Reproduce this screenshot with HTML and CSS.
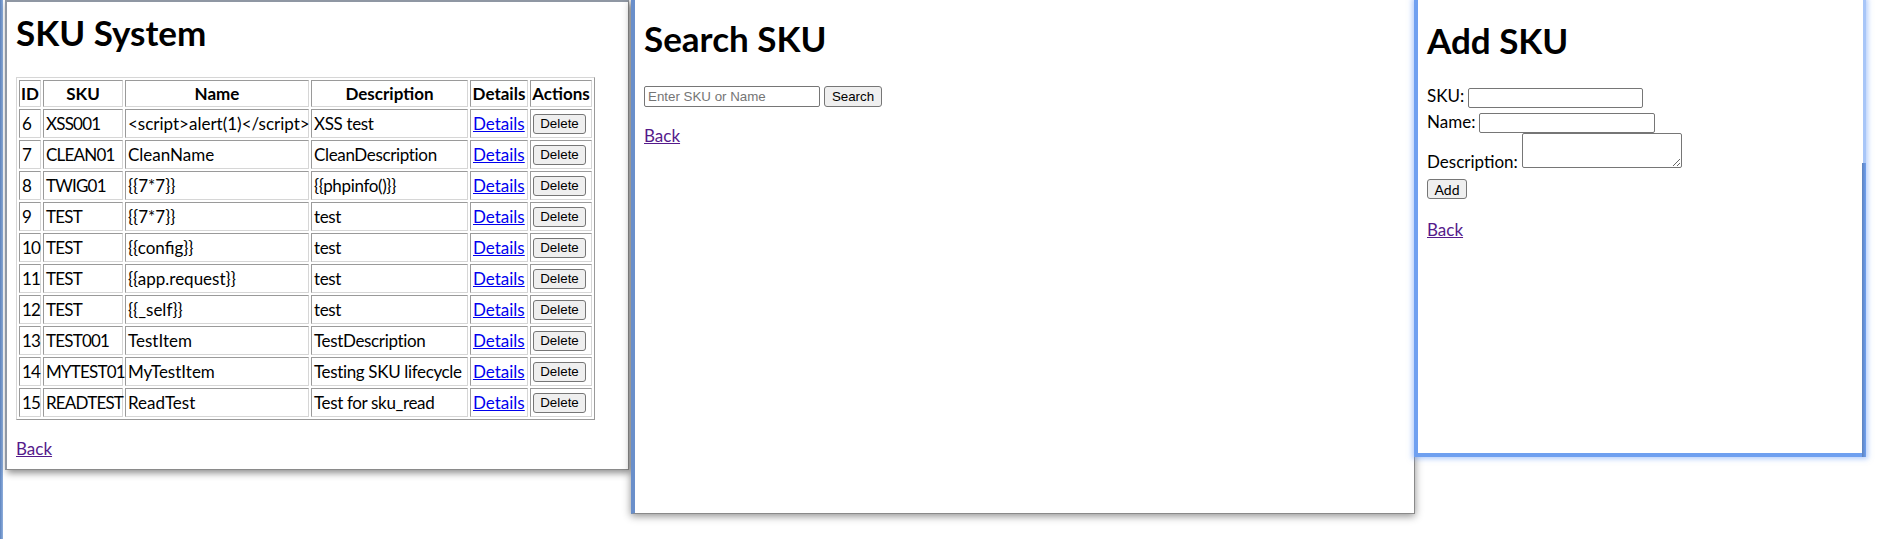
FILE: index.html
```html
<!DOCTYPE html>
<html lang="en">
<head>
<meta charset="utf-8">
<title>SKU System</title>
<link rel="stylesheet" href="styles.css">
</head>
<body>
<div class="desktop">
  <div class="edge"></div>

  <section class="win win-list">
    <h1>SKU System</h1>
    <table class="sku-table">
      <thead>
        <tr>
          <th class="c-id">ID</th>
          <th class="c-sku">SKU</th>
          <th class="c-name">Name</th>
          <th class="c-desc">Description</th>
          <th class="c-det">Details</th>
          <th class="c-act">Actions</th>
        </tr>
      </thead>
      <tbody>
        <tr><td class="t-id">6</td><td class="t-sku">XSS001</td><td>&lt;script&gt;alert(1)&lt;/script&gt;</td><td class="t-desc">XSS test</td><td><a class="link" href="#">Details</a></td><td><button class="btn btn-del">Delete</button></td></tr>
        <tr><td class="t-id">7</td><td class="t-sku">CLEAN01</td><td>CleanName</td><td class="t-desc">CleanDescription</td><td><a class="link" href="#">Details</a></td><td><button class="btn btn-del">Delete</button></td></tr>
        <tr><td class="t-id">8</td><td class="t-sku">TWIG01</td><td>{{7*7}}</td><td class="t-desc">{{phpinfo()}}</td><td><a class="link" href="#">Details</a></td><td><button class="btn btn-del">Delete</button></td></tr>
        <tr><td class="t-id">9</td><td class="t-sku">TEST</td><td>{{7*7}}</td><td class="t-desc">test</td><td><a class="link" href="#">Details</a></td><td><button class="btn btn-del">Delete</button></td></tr>
        <tr><td class="t-id">10</td><td class="t-sku">TEST</td><td>{{config}}</td><td class="t-desc">test</td><td><a class="link" href="#">Details</a></td><td><button class="btn btn-del">Delete</button></td></tr>
        <tr><td class="t-id">11</td><td class="t-sku">TEST</td><td>{{app.request}}</td><td class="t-desc">test</td><td><a class="link" href="#">Details</a></td><td><button class="btn btn-del">Delete</button></td></tr>
        <tr><td class="t-id">12</td><td class="t-sku">TEST</td><td>{{_self}}</td><td class="t-desc">test</td><td><a class="link" href="#">Details</a></td><td><button class="btn btn-del">Delete</button></td></tr>
        <tr><td class="t-id">13</td><td class="t-sku">TEST001</td><td>TestItem</td><td class="t-desc">TestDescription</td><td><a class="link" href="#">Details</a></td><td><button class="btn btn-del">Delete</button></td></tr>
        <tr><td class="t-id">14</td><td class="t-sku">MYTEST01</td><td>MyTestItem</td><td class="t-desc">Testing SKU lifecycle</td><td><a class="link" href="#">Details</a></td><td><button class="btn btn-del">Delete</button></td></tr>
        <tr><td class="t-id">15</td><td class="t-sku">READTEST</td><td>ReadTest</td><td class="t-desc">Test for sku_read</td><td><a class="link" href="#">Details</a></td><td><button class="btn btn-del">Delete</button></td></tr>
      </tbody>
    </table>
    <p class="back"><a class="visited" href="#">Back</a></p>
  </section>

  <section class="win win-search">
    <h1>Search SKU</h1>
    <form class="search-form">
      <input class="field-input search-input" type="text" placeholder="Enter SKU or Name">
      <button class="btn btn-search" type="button">Search</button>
    </form>
    <p class="back"><a class="visited" href="#">Back</a></p>
  </section>

  <section class="win win-add">
    <h1>Add SKU</h1>
    <form class="add-form">
      <div class="row row-sku"><label>SKU:</label><input class="field-input in-sku" type="text"></div>
      <div class="row row-name"><label>Name:</label><input class="field-input in-name" type="text"></div>
      <div class="row row-desc"><label>Description:</label><textarea class="field-input in-desc"></textarea></div>
      <button class="btn btn-add" type="button">Add</button>
    </form>
    <p class="back back-add"><a class="visited" href="#">Back</a></p>
  </section>
</div>
</body>
</html>
```

FILE: styles.css
```css
html, body {
  margin: 0;
  padding: 0;
  background: #ffffff;
}

body {
  font-family: Lato, "Noto Sans", sans-serif;
  font-size: 17px;
  color: #000;
  width: 1878px;
  height: 539px;
  overflow: hidden;
}

.desktop {
  position: relative;
  width: 1878px;
  height: 539px;
  overflow: hidden;
  background: #fff;
}

.edge {
  position: absolute;
  left: 0;
  top: 0;
  bottom: 0;
  width: 3px;
  background: linear-gradient(90deg, #5d84bf, #90b0dd);
}

.win {
  position: absolute;
  top: 0;
  background: #fff;
  box-sizing: border-box;
}

.win h1 {
  font: 700 35px/42px Lato, "Noto Sans", sans-serif;
  margin: 0;
}

/* window 1 */
.win-list {
  left: 5px;
  width: 624px;
  height: 470px;
  border-top: 2px solid #8f97a3;
  border-left: 2px solid #8f97a3;
  border-right: 1px solid #8a8a8a;
  border-bottom: 1px solid #8a8a8a;
  padding: 0 8px 0 9px;
  box-shadow: 2px 3px 7px rgba(0, 0, 0, 0.45);
  z-index: 1;
}

.win-list h1 {
  margin-top: 9px;
}

.sku-table {
  margin-top: 24px;
  border-collapse: separate;
  border-spacing: 2px;
  table-layout: fixed;
  width: 579px;
  border: 1px solid;
  border-color: #d6d6d6 #9a9a9a #9a9a9a #d6d6d6;
}

.sku-table th,
.sku-table td {
  box-sizing: border-box;
  border: 1px solid;
  border-color: #9a9a9a #d6d6d6 #d6d6d6 #9a9a9a;
  padding: 2px 0 2px 2px;
  line-height: 23px;
  height: 29px;
  text-align: left;
  white-space: nowrap;
  overflow: visible;
  vertical-align: middle;
}

.sku-table th {
  font-weight: 700;
  text-align: center;
  height: 27px;
  padding: 1px 0;
}

.t-id,
.t-sku {
  letter-spacing: -0.8px;
}

.t-desc {
  letter-spacing: -0.35px;
}

.c-id { width: 22px; }
.c-sku { width: 80px; }
.c-name { width: 184px; }
.c-desc { width: 157px; }
.c-det { width: 58px; }
.c-act { width: 62px; }

.link {
  color: #0000ee;
  text-decoration: underline;
}

.visited {
  color: #551a8b;
  text-decoration: underline;
}

.btn {
  font: 13.33px "Liberation Sans", Arial, sans-serif;
  color: #000;
  background: #efefef;
  border: 1px solid #767676;
  border-radius: 3px;
  padding: 0 6px;
  box-sizing: border-box;
  margin: 0;
}

.btn-del {
  display: block;
  width: 53px;
  height: 20px;
}

.back {
  margin: 17px 0 0;
  line-height: 23px;
}

/* window 2 */
.win-search {
  left: 631px;
  width: 784px;
  height: 514px;
  border-left: 4px solid #6a8fca;
  border-right: 1px solid #8a8a8a;
  border-bottom: 1px solid #8a8a8a;
  padding: 0 8px 0 9px;
  box-shadow: 0 2px 8px rgba(0, 0, 0, 0.45);
  z-index: 2;
}

.win-search h1 {
  margin-top: 17px;
}

.search-form {
  display: flex;
  gap: 4px;
  margin: 27px 0 0;
}

.field-input {
  font: 13.33px "Liberation Sans", Arial, sans-serif;
  border: 1px solid #767676;
  border-radius: 2px;
  padding: 1px 3px;
  box-sizing: border-box;
  background: #fff;
  margin: 0;
}

.field-input::placeholder {
  color: #757575;
}

.search-input {
  width: 176px;
  height: 21px;
}

.btn-search {
  width: 58px;
  height: 21px;
  padding: 0;
}

/* window 3 */
.win-add {
  left: 1414px;
  width: 452px;
  height: 457px;
  border: 4px solid #6fa0f0;
  border-top: 0;
  border-right: 3px solid #a8c6f8;
  padding: 0 8px 0 9px;
  box-shadow: 0 0 5px 2px rgba(110, 160, 250, 0.5);
  z-index: 3;
}

.win-add::after {
  content: "";
  position: absolute;
  right: -3px;
  top: 163px;
  bottom: -4px;
  width: 4px;
  background: linear-gradient(90deg, #5d82bd, #6fa0f0);
}

.win-add h1 {
  margin-top: 19px;
}

.add-form {
  margin: 25px 0 0;
}

.row {
  display: flex;
  align-items: baseline;
  gap: 4px;
  line-height: 20px;
}

.row-name {
  margin-top: 4px;
}

.row-desc {
  margin-top: 0;
  align-items: flex-end;
}

.in-sku {
  width: 175px;
  height: 20px;
}

.in-name {
  width: 176px;
  height: 20px;
}

.in-desc {
  width: 160px;
  height: 35px;
  margin-bottom: 4px;
}

.btn-add {
  display: block;
  margin-top: 7px;
  width: 40px;
  height: 20px;
  padding: 0;
  font: 14px Lato, "Noto Sans", sans-serif;
}

.back-add {
  margin-top: 19px;
}
```
